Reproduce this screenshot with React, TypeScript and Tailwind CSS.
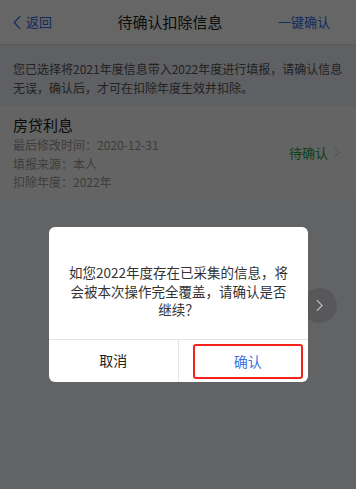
import React from "react";

const font = '"Noto Sans CJK SC", "Noto Sans", sans-serif';

function Chevron({ className }: { className?: string }) {
  return (
    <svg viewBox="0 0 8 14" className={className} fill="none" stroke="currentColor" strokeWidth="1.3">
      <path d="M1 1l6 6-6 6" />
    </svg>
  );
}

export default function App() {
  return (
    <div className="relative h-[489px] w-[356px] overflow-hidden bg-[#f5f7fd]" style={{ fontFamily: font }}>
      <header className="flex h-[45px] items-center justify-between border-b border-[#e3e3e6] bg-white pl-[13px] pr-[26px]">
        <div className="flex items-center gap-[5px] text-[13px] text-[#2f6de6]">
          <svg viewBox="0 0 10 18" className="h-[17px] w-[8px]" fill="none" stroke="currentColor" strokeWidth="1.6">
            <path d="M9 1L1.5 9 9 17" />
          </svg>
          <span>返回</span>
        </div>
        <h1 className="pl-[10px] text-[15px] text-[#222]">待确认扣除信息</h1>
        <span className="text-[13px] text-[#2f6de6]">一键确认</span>
      </header>

      <p className="bg-[#eef0f8] pb-[9px] pl-[13px] pr-[10px] pt-[14px] text-[12px] leading-[19px] text-[#555]">
        您已选择将2021年度信息带入2022年度进行填报，请确认信息无误，确认后，才可在扣除年度生效并扣除。
      </p>

      <section className="flex items-center justify-between bg-[#fbfbfb] pb-[6px] pl-[13px] pr-[16px] pt-[8px]">
        <div>
          <div className="text-[15px] leading-[22px] text-[#222]">房贷利息</div>
          <div className="text-[12px] leading-[18.5px] text-[#999]">
            <div>最后修改时间：2020-12-31</div>
            <div>填报来源：本人</div>
            <div>扣除年度：2022年</div>
          </div>
        </div>
        <div className="flex items-center gap-[6px] text-[13px] text-[#1fa045]">
          <span>待确认</span>
          <Chevron className="h-[11px] w-[6px] text-[#bbb]" />
        </div>
      </section>

      <div className="absolute inset-0 bg-black/60" />

      <div className="absolute left-[302px] top-[288px] flex h-[35px] w-[35px] items-center justify-center rounded-full bg-black/10 text-[#bbb]">
        <Chevron className="h-[13px] w-[7px]" />
      </div>

      <div className="absolute left-[49px] top-[227px] w-[259px] overflow-hidden rounded-[6px] bg-white">
        <p className="px-[18px] pb-[20px] pt-[36px] text-center text-[13.5px] leading-[18.5px] text-[#333]">
          如您2022年度存在已采集的信息，将会被本次操作完全覆盖，请确认是否继续？
        </p>
        <div className="grid h-[43px] grid-cols-2 border-t border-[#e5e5e5]">
          <button className="border-r border-[#e5e5e5] text-[14px] text-[#222]">取消</button>
          <div className="pb-[3px] pl-[14px] pr-[5px] pt-[4px]">
            <button className="h-full w-full rounded-[3px] border-2 border-[#f5221b] text-[14px] text-[#3b73e0]">
              确认
            </button>
          </div>
        </div>
      </div>
    </div>
  );
}
